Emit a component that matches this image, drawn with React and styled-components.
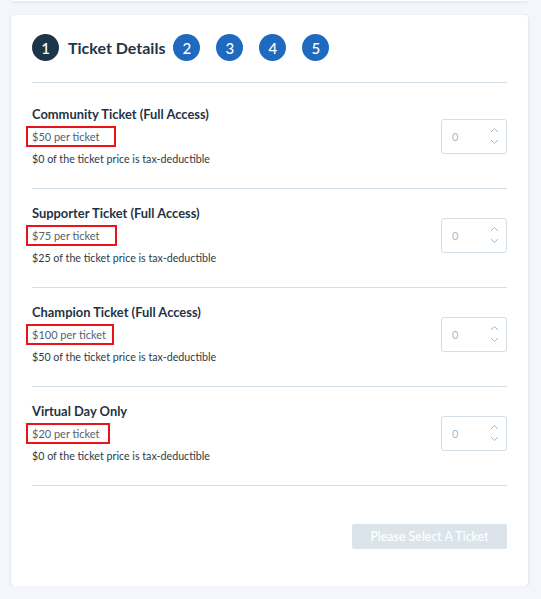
import styled, { createGlobalStyle } from "styled-components";

const GlobalStyle = createGlobalStyle`
  html, body {
    margin: 0;
    padding: 0;
    background: #f3f6fa;
    font-family: Lato, "Open Sans", sans-serif;
  }
`;

const tickets = [
  { name: "Community Ticket (Full Access)", price: "$50 per ticket", tax: "$0 of the ticket price is tax-deductible", box: 90 },
  { name: "Supporter Ticket (Full Access)", price: "$75 per ticket", tax: "$25 of the ticket price is tax-deductible", box: 91 },
  { name: "Champion Ticket (Full Access)", price: "$100 per ticket", tax: "$50 of the ticket price is tax-deductible", box: 88 },
  { name: "Virtual Day Only", price: "$20 per ticket", tax: "$0 of the ticket price is tax-deductible", box: 84 },
];

export default function App() {
  return (
    <Page>
      <GlobalStyle />
      <PrevCard />
      <Card>
        <Steps>
          <StepCircle $active>1</StepCircle>
          <StepLabel>Ticket Details</StepLabel>
          <StepCircle>2</StepCircle>
          <StepCircle>3</StepCircle>
          <StepCircle>4</StepCircle>
          <StepCircle>5</StepCircle>
        </Steps>
        <List>
          {tickets.map((t) => (
            <TicketRow key={t.name}>
              <TicketInfo>
                <TicketName>{t.name}</TicketName>
                <Price $w={t.box}>{t.price}</Price>
                <Tax>{t.tax}</Tax>
              </TicketInfo>
              <QtyBox>
                <QtyValue>0</QtyValue>
                <Spinner>
                  <svg width="9" height="6" viewBox="0 0 9 6">
                    <path d="M1 5 L4.5 1.5 L8 5" fill="none" stroke="#a9b4bd" strokeWidth="1" />
                  </svg>
                  <svg width="9" height="6" viewBox="0 0 9 6">
                    <path d="M1 1 L4.5 4.5 L8 1" fill="none" stroke="#a9b4bd" strokeWidth="1" />
                  </svg>
                </Spinner>
              </QtyBox>
            </TicketRow>
          ))}
        </List>
        <Footer>
          <SubmitButton disabled>Please Select A Ticket</SubmitButton>
        </Footer>
      </Card>
    </Page>
  );
}

const Page = styled.div`
  padding: 0 13px 0 11px;
  box-sizing: border-box;
  width: 541px;
`;

const PrevCard = styled.div`
  height: 1px;
  margin: 0 1px 14px 1px;
  background: #ffffff;
  border-radius: 0 0 4px 4px;
  box-shadow: 0 1px 3px rgba(120, 150, 180, 0.35);
`;

const Card = styled.div`
  background: #ffffff;
  border-radius: 4px;
  box-shadow: 0 1px 3px rgba(120, 150, 180, 0.3);
  padding: 19px 21px 37px 21px;
`;

const Steps = styled.div`
  display: flex;
  align-items: center;
  padding-bottom: 21px;
  border-bottom: 1px solid #d3dee6;
  margin-bottom: 7px;
`;

const StepCircle = styled.div`
  width: 27px;
  height: 27px;
  border-radius: 50%;
  background: ${(p) => (p.$active ? "#1e3548" : "#1f69bf")};
  color: #ffffff;
  font-size: 15px;
  font-weight: 500;
  display: flex;
  align-items: center;
  justify-content: center;
  margin-right: 16px;
  flex-shrink: 0;
`;

const StepLabel = styled.div`
  font-size: 16px;
  font-weight: 700;
  color: #1e3548;
  margin-left: -7px;
  margin-right: 8px;
`;

const List = styled.div`
  display: flex;
  flex-direction: column;
`;

const TicketRow = styled.div`
  display: flex;
  justify-content: space-between;
  align-items: center;
  padding: 16px 0 22px 0;
  border-bottom: 1px solid #d3dee6;
`;

const TicketInfo = styled.div`
  display: flex;
  flex-direction: column;
  gap: 4px;
`;

const TicketName = styled.div`
  font-size: 12.9px;
  font-weight: 700;
  line-height: 16px;
  color: #1f3346;
`;

const Price = styled.div`
  box-sizing: border-box;
  width: ${(p) => p.$w}px;
  height: 21px;
  margin-left: -6px;
  padding-left: 4px;
  border: 2px solid #e8141a;
  display: flex;
  align-items: center;
  font-size: 11px;
  color: #56616c;
`;

const Tax = styled.div`
  font-size: 10.7px;
  line-height: 15px;
  color: #2c3b49;
`;

const QtyBox = styled.div`
  box-sizing: border-box;
  width: 66px;
  height: 35px;
  border: 1px solid #d3dee6;
  border-radius: 3px;
  display: flex;
  align-items: center;
  justify-content: space-between;
  padding: 0 7px 0 10px;
`;

const QtyValue = styled.span`
  font-size: 11px;
  color: #b0b8bf;
`;

const Spinner = styled.div`
  display: flex;
  flex-direction: column;
  gap: 6px;
`;

const Footer = styled.div`
  display: flex;
  justify-content: flex-end;
  margin-top: 38px;
`;

const SubmitButton = styled.button`
  width: 155px;
  height: 25px;
  border: none;
  border-radius: 2px;
  background: #dce4eb;
  color: #ffffff;
  font-family: Lato, "Open Sans", sans-serif;
  font-size: 12.4px;
  font-weight: 500;
  padding: 0;
`;
